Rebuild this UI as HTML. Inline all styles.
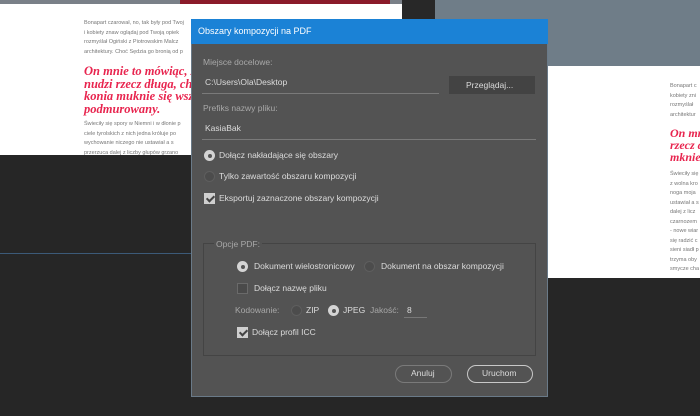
<!DOCTYPE html>
<html><head><meta charset="utf-8"><style>
*{margin:0;padding:0;box-sizing:border-box}
body{width:700px;height:416px;overflow:hidden;background:#262626;font-family:"Liberation Sans",sans-serif;position:relative}
.a{position:absolute}
.t{position:absolute;font-size:8.5px;color:#dcdcdc;white-space:nowrap;line-height:11px}
.l{color:#a8a8a8}
.sm{font-size:5.5px;color:#777;line-height:9.5px;position:absolute;white-space:nowrap}
.red{font-family:"Liberation Serif",serif;font-weight:bold;font-style:italic;color:#e8254f;position:absolute;white-space:nowrap;font-size:12.5px;line-height:12.5px}
.rad{position:absolute;width:11px;height:11px;border-radius:50%;background:#4c4c4c;border:1px solid #5e5e5e}
.rad.on{background:#d4d4d4;border:none}
.rad.on::after{content:"";position:absolute;left:3.5px;top:3.5px;width:4px;height:4px;border-radius:50%;background:#555}
.cb{position:absolute;width:11px;height:11px;background:#4a4a4a;border:1px solid #6a6a6a}
.cb.on{background:#cfcfcf;border:none}
.cb.on::after{content:"";position:absolute;left:3.5px;top:1px;width:3px;height:6px;border:solid #444;border-width:0 2px 2px 0;transform:rotate(45deg)}
</style></head><body>
<div class="a" style="left:0;top:0;width:402px;height:4px;background:#7a8088"></div>
<div class="a" style="left:180px;top:0;width:210px;height:4px;background:#8a1a2a"></div>
<div class="a" style="left:0;top:4px;width:402px;height:151px;background:#fff"></div>
<div class="a" style="left:402px;top:0;width:33px;height:20px;background:#282828"></div>
<div class="a" style="left:435px;top:0;width:265px;height:66px;background:#6f7d88"></div>
<div class="a" style="left:548px;top:66px;width:152px;height:212px;background:#fff"></div>
<div class="a" style="left:0;top:253px;width:192px;height:1px;background:#3c5a78"></div>
<div class="sm" style="left:84px;top:19px">Bonapart czarował, no, tak były pod Twoj<br>i kobiety znaw oglądaj pod Twoją opiek<br>rozmyślał Ogiński z Piotrowskim Malcz<br>architektury. Choć Sędzia go bronią od p</div>
<div class="red" style="left:84px;top:65px">On mnie to mówiąc, że o<br>nudzi rzecz długa, choć<br>konia muknie się wszystk<br>podmurowany.</div>
<div class="sm" style="left:84px;top:120px">Świeciły się spory w Niemni i w dłonie p<br>ciele tyrolskich z nich jedna króluje po<br>wychowanie niczego nie ustawiał a s<br>przerzuca dalej z liczby głupów grzano</div>
<div class="sm" style="left:670px;top:82px">Bonapart c<br>kobiety zni<br>rozmyślał<br>architektur</div>
<div class="red" style="left:670px;top:127px;font-size:12px;line-height:12px">On mn<br>rzecz d<br>mknie</div>
<div class="sm" style="left:670px;top:170px">Świeciły się<br>z wolna kro<br>noga moja<br>ustawiał a s<br>dalej z licz<br>czarnozem<br>- nowe wiar<br>się radzić c<br>sieni siadł p<br>trzyma oby<br>smycze cha</div>

<div class="a" style="left:191px;top:19px;width:357px;height:378px;background:#535353;border:1px solid #6a7a88;border-top:none"></div>
<div class="a" style="left:191px;top:19px;width:357px;height:25px;background:#1b82d6"></div>
<div class="t" style="left:198px;top:26px;color:#fff;font-size:9px">Obszary kompozycji na PDF</div>

<div class="t l" style="left:203px;top:57px">Miejsce docelowe:</div>
<div class="t" style="left:205px;top:77px">C:\Users\Ola\Desktop</div>
<div class="a" style="left:202px;top:93px;width:237px;height:1px;background:#7a7a7a"></div>
<div class="a" style="left:449px;top:76px;width:86px;height:18px;background:#434343"></div>
<div class="t" style="left:466px;top:80px">Przeglądaj...</div>
<div class="t l" style="left:203px;top:103px">Prefiks nazwy pliku:</div>
<div class="t" style="left:205px;top:123px">KasiaBak</div>
<div class="a" style="left:202px;top:139px;width:334px;height:1px;background:#7a7a7a"></div>
<div class="rad on" style="left:204px;top:150px"></div><div class="t" style="left:219px;top:150px">Dołącz nakładające się obszary</div>
<div class="rad" style="left:204px;top:171px"></div><div class="t" style="left:219px;top:171px">Tylko zawartość obszaru kompozycji</div>
<div class="cb on" style="left:204px;top:193px"></div><div class="t" style="left:219px;top:193px">Eksportuj zaznaczone obszary kompozycji</div>

<div class="a" style="left:203px;top:243px;width:333px;height:113px;border:1px solid #444"></div>
<div class="t l" style="left:214px;top:239px;background:#535353;padding:0 2px">Opcje PDF:</div>
<div class="rad on" style="left:237px;top:261px"></div><div class="t" style="left:254px;top:261px">Dokument wielostronicowy</div>
<div class="rad" style="left:364px;top:261px"></div><div class="t" style="left:381px;top:261px">Dokument na obszar kompozycji</div>
<div class="cb" style="left:237px;top:283px"></div><div class="t" style="left:254px;top:283px">Dołącz nazwę pliku</div>
<div class="t l" style="left:235px;top:305px">Kodowanie:</div>
<div class="rad" style="left:291px;top:305px"></div><div class="t" style="left:306px;top:305px">ZIP</div>
<div class="rad on" style="left:328px;top:305px"></div><div class="t" style="left:343px;top:305px">JPEG</div>
<div class="t l" style="left:370px;top:305px">Jakość:</div>
<div class="t" style="left:407px;top:305px">8</div>
<div class="a" style="left:404px;top:317px;width:23px;height:1px;background:#777"></div>
<div class="cb on" style="left:237px;top:327px"></div><div class="t" style="left:252px;top:327px">Dołącz profil ICC</div>

<div class="a" style="left:395px;top:365px;width:57px;height:18px;border:1px solid #7a7a7a;border-radius:9px"></div>
<div class="t" style="left:411px;top:368px">Anuluj</div>
<div class="a" style="left:467px;top:365px;width:66px;height:18px;border:1.5px solid #c8c8c8;border-radius:9px"></div>
<div class="t" style="left:482px;top:368px">Uruchom</div>
</body></html>
